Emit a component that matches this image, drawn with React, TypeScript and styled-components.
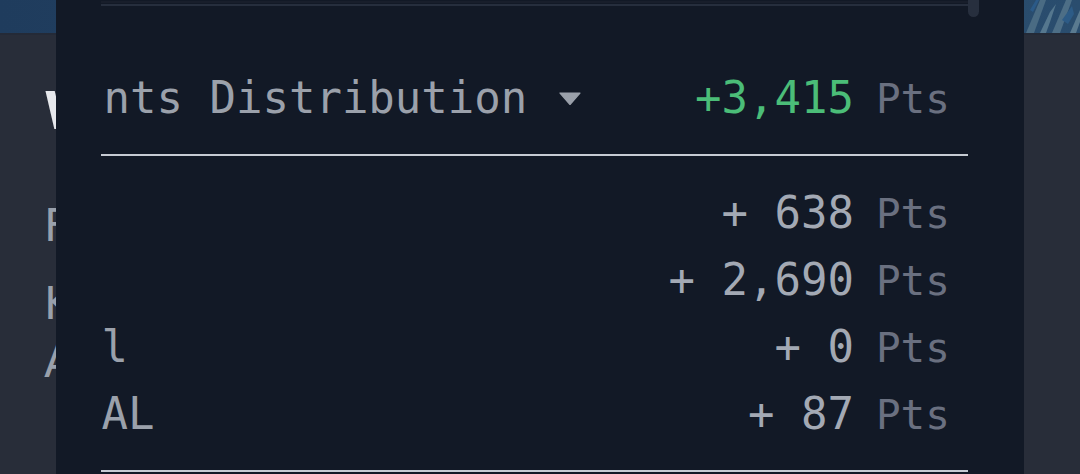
import React from 'react';
import styled, { createGlobalStyle } from 'styled-components';

const GlobalStyle = createGlobalStyle`
  html, body {
    margin: 0;
    padding: 0;
    background: #282d39;
    overflow: hidden;
  }
`;

const Page = styled.div`
  position: relative;
  width: 1080px;
  height: 474px;
  overflow: hidden;
  background: #282d39;
  font-family: 'DejaVu Sans', sans-serif;
`;

const Banner = styled.div`
  height: 33px;
  background: linear-gradient(180deg, #1f3b5b 0%, #1d3655 100%);
  border-bottom: 2px solid #242a37;
  overflow: hidden;

  svg {
    display: block;
  }
`;

const Backdrop = styled.div`
  display: flex;
  flex-direction: column;
  padding-left: 44px;
`;

const Heading = styled.div`
  margin-top: 51px;
  font-size: 51px;
  line-height: 52px;
  font-weight: 700;
  color: #e6e8ec;
  white-space: nowrap;
`;

const BackLine = styled.div<{ $gap: number }>`
  margin-top: ${(p) => p.$gap}px;
  font-size: 44px;
  line-height: 44px;
  color: #99a0ab;
  white-space: nowrap;
`;

const Sheet = styled.div`
  position: absolute;
  top: 0;
  bottom: 0;
  left: 56px;
  right: 56px;
  background: #121926;
  padding: 0 45px;
  display: flex;
`;

const Body = styled.div`
  flex: 1;
  min-width: 0;
  overflow: hidden;
  display: flex;
  flex-direction: column;
  font-family: 'DejaVu Sans Mono', monospace;
`;

const ScrollTrack = styled.div`
  width: 11px;
  flex-shrink: 0;
`;

const ScrollThumb = styled.div`
  height: 17px;
  border-radius: 0 0 6px 6px;
  background: #272f3e;
`;

const TopRule = styled.div`
  margin-top: 4px;
  height: 2px;
  background: #262e3d;
  box-shadow: 0 -3px 0 #181e2b;
`;

const Table = styled.div`
  margin-left: -71px;
  display: flex;
  flex-direction: column;
`;

const HeaderRow = styled.div`
  display: flex;
  align-items: baseline;
  padding: 70px 18px 34px 0;
  border-bottom: 2px solid #c6cbd3;
`;

const Rows = styled.div`
  display: flex;
  flex-direction: column;
  padding: 23px 0;
  border-bottom: 2px solid #c6cbd3;
`;

const Row = styled.div`
  display: flex;
  align-items: baseline;
  padding: 11.5px 18px 11.5px 0;
`;

const Title = styled.div`
  flex: 1;
  min-width: 0;
  margin-left: -6px;
  display: flex;
  align-items: center;
  font-size: 44px;
  line-height: 44px;
  color: #9ba1ab;
  white-space: nowrap;

  svg {
    margin-left: 32px;
    flex-shrink: 0;
  }
`;

const RowLabel = styled.div`
  flex: 1;
  min-width: 0;
  margin-left: -8px;
  font-size: 44px;
  line-height: 44px;
  color: #9ba1ab;
  white-space: pre;
`;

const Value = styled.div<{ $positive?: boolean }>`
  font-size: 44px;
  line-height: 44px;
  color: ${(p) => (p.$positive ? '#4bbd78' : '#a3a9b4')};
  white-space: pre;
`;

const Unit = styled.div`
  margin-left: 22px;
  font-size: 41px;
  line-height: 41px;
  color: #6a7080;
`;

const Caret: React.FC = () => (
  <svg width="22" height="13" viewBox="0 0 22 13">
    <path d="M1 1 H21 L11 12.5 Z" fill="#9aa0aa" stroke="#9aa0aa" strokeWidth="1.2" strokeLinejoin="round" />
  </svg>
);

const BannerArt: React.FC = () => (
  <svg width="1080" height="33" viewBox="0 0 1080 33">
    <defs>
      <linearGradient id="bannerFade" x1="0" y1="0" x2="1" y2="0">
        <stop offset="0" stopColor="#1f3c5d" />
        <stop offset="1" stopColor="#2a4d6e" />
      </linearGradient>
    </defs>
    <rect width="1080" height="33" fill="url(#bannerFade)" />
    <path d="M1026 33 L1040 0 L1046 0 L1034 33 Z" fill="#4a6b83" />
    <path d="M1040 33 L1050 12 L1056 4 L1050 22 L1046 33 Z" fill="#55778e" />
    <path d="M1052 33 L1066 0 L1072 0 L1060 33 Z" fill="#4d6e86" />
    <path d="M1062 20 L1072 6 L1074 14 L1068 24 Z" fill="#2d5b86" />
    <path d="M1070 33 L1080 10 L1080 22 L1076 33 Z" fill="#5a7a90" />
    <path d="M1030 10 L1036 0 L1039 0 L1033 12 Z" fill="#2b5a88" />
  </svg>
);

const rows = [
  { label: 'Buy', value: '+ 638' },
  { label: 'Bet', value: '+ 2,690' },
  { label: 'Pool', value: '+ 0' },
  { label: 'RIVAL', value: '+ 87' },
];

export default function App() {
  return (
    <Page>
      <GlobalStyle />
      <Banner>
        <BannerArt />
      </Banner>
      <Backdrop>
        <Heading>Welcome</Heading>
        <BackLine $gap={66}>Fees</BackLine>
        <BackLine $gap={34}>Keys</BackLine>
        <BackLine $gap={14}>About</BackLine>
      </Backdrop>

      <Sheet>
        <Body>
          <TopRule />
          <Table>
            <HeaderRow>
              <Title>
                Points Distribution
                <Caret />
              </Title>
              <Value $positive>+3,415</Value>
              <Unit>Pts</Unit>
            </HeaderRow>
            <Rows>
              {rows.map((r) => (
                <Row key={r.label}>
                  <RowLabel>{r.label}</RowLabel>
                  <Value>{r.value}</Value>
                  <Unit>Pts</Unit>
                </Row>
              ))}
            </Rows>
          </Table>
        </Body>
        <ScrollTrack>
          <ScrollThumb />
        </ScrollTrack>
      </Sheet>
    </Page>
  );
}
